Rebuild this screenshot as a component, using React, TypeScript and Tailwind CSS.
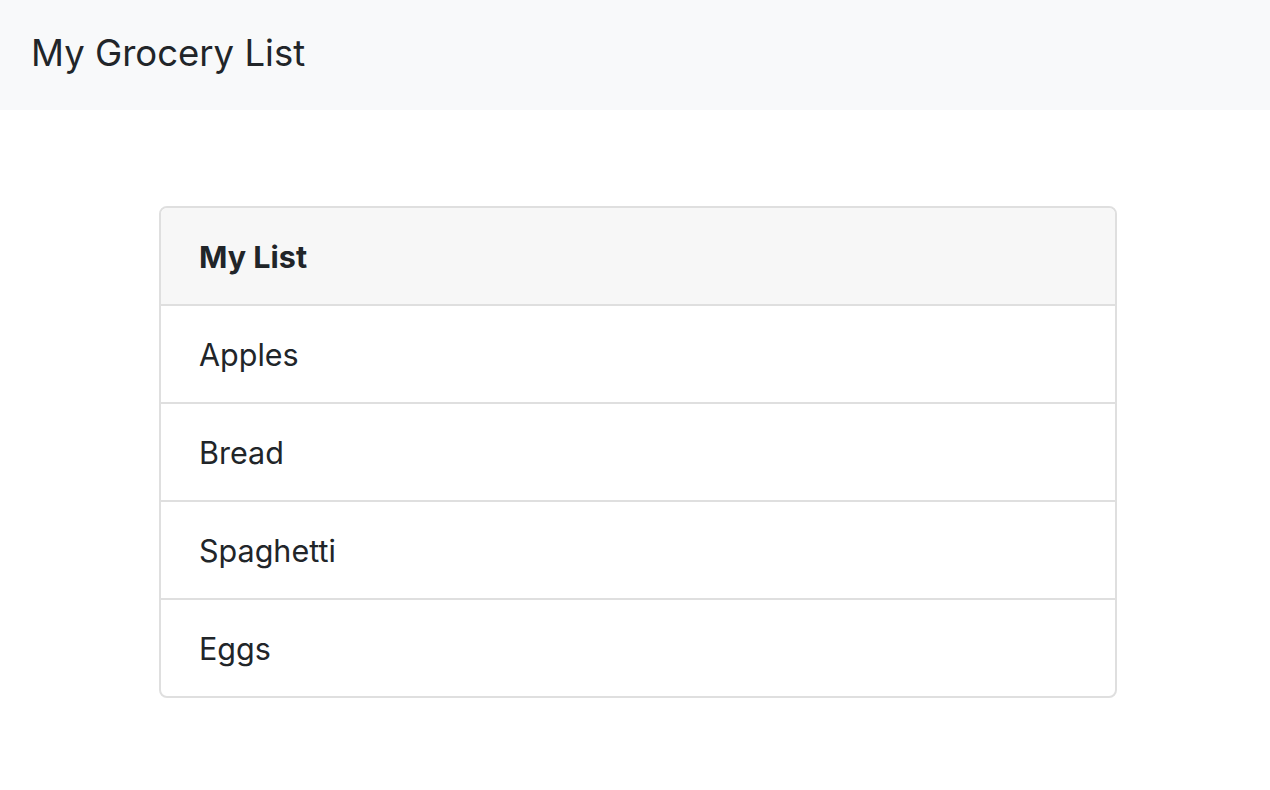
const items = ["Apples", "Bread", "Spaghetti", "Eggs"];

export default function App() {
  return (
    <div className="min-h-screen bg-white text-[#212529] font-['Inter',sans-serif]">
      <nav className="h-[110px] bg-[#f8f9fa] px-8 flex items-center">
        <span className="text-[36.5px] leading-none pb-1 -ml-px">My Grocery List</span>
      </nav>

      <div className="ml-[159px] mt-[96px] w-[958px] rounded-lg border-2 border-[#dfdfdf] overflow-hidden">
        <div className="bg-[#f7f7f7] border-b-2 border-[#dfdfdf] px-[38px] pt-[25px] pb-[23px] text-[30.5px] leading-[48px] font-bold">
          My List
        </div>
        <ul>
          {items.map((item, i) => (
            <li
              key={item}
              className={
                "px-[38px] pt-[25px] pb-[23px] text-[30.5px] leading-[48px] " +
                (i < items.length - 1 ? "border-b-2 border-[#dfdfdf]" : "")
              }
            >
              {item}
            </li>
          ))}
        </ul>
      </div>
    </div>
  );
}
